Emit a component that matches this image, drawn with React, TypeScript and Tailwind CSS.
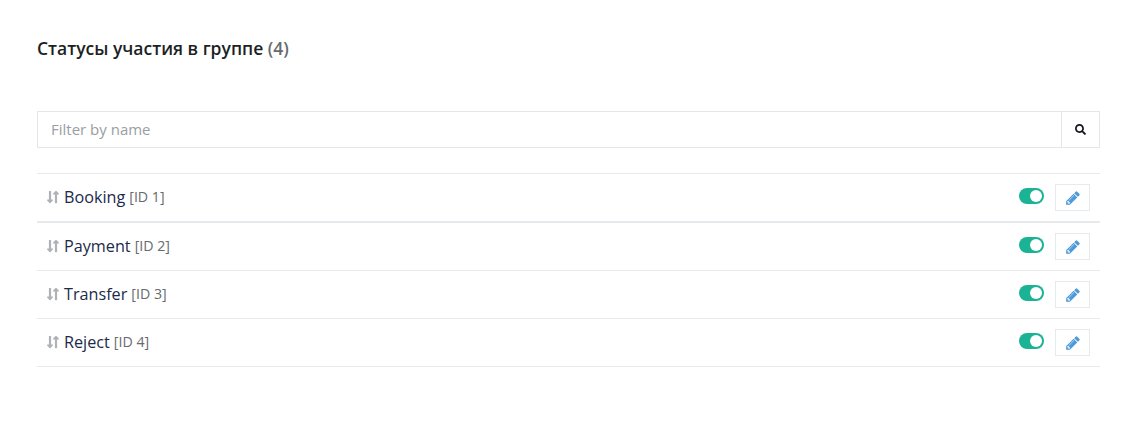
import { FaLongArrowAltDown, FaLongArrowAltUp, FaSearch } from 'react-icons/fa'

const statuses = [
  { name: 'Booking', id: 1 },
  { name: 'Payment', id: 2 },
  { name: 'Transfer', id: 3 },
  { name: 'Reject', id: 4 },
]

function Toggle() {
  return (
    <span className="-mt-[3px] flex h-[16px] w-[25px] justify-end rounded-full bg-[#1ab394] p-[2px]">
      <span className="h-[12px] w-[12px] rounded-full bg-white" />
    </span>
  )
}

function PencilIcon() {
  return (
    <svg viewBox="0 0 1792 1792" fill="currentColor" className="h-[16px] w-[16px]">
      <path d="M491 1536l91-91-235-235-91 91v107h128v128h107zm523-928q0-22-22-22-10 0-17 7l-542 542q-7 7-7 17 0 22 22 22 10 0 17-7l542-542q7-7 7-17zm-54-192l416 416-832 832h-416v-416zm683 96q0 53-37 90l-166 166-416-416 166-165q36-38 90-38 53 0 91 38l235 234q37 39 37 91z" />
    </svg>
  )
}

export default function App() {
  return (
    <div className="h-[421px] bg-white px-[37px] pr-[44px] pt-[37px] font-['Open_Sans',sans-serif] text-[#1f2a44]">
      {/* Title */}
      <h2 className="h-[23px] text-[17.5px] leading-[23px] font-semibold text-[#1c1f24]">
        Статусы участия в группе <span className="text-[#676a6c]">(4)</span>
      </h2>

      {/* Filter */}
      <div className="mt-[51px] flex h-[37px] border border-[#e5e6e7]">
        <input
          placeholder="Filter by name"
          className="min-w-0 flex-1 px-[13px] text-[15px] outline-none placeholder:text-[#9a9ea3]"
        />
        <button className="flex w-[38px] items-center justify-center border-l border-[#e5e6e7] text-[#14171f]">
          <FaSearch className="h-[11px] w-[11px]" />
        </button>
      </div>

      {/* List */}
      <ul className="mt-[25px] border-t border-[#e7eaec]">
        {statuses.map((item, i) => (
          <li
            key={item.id}
            className={`flex items-center pr-[10px] pl-[10px] ${
              i === 0 ? 'h-[49px] border-b-2' : 'h-[48px] border-b'
            } border-[#e7eaec]`}
          >
            <span className="mr-[3px] -mt-[2px] flex w-[14px] text-[#aeb1b5]">
              <FaLongArrowAltDown className="-mx-[1px] h-[14px] w-[8px]" />
              <FaLongArrowAltUp className="-mx-[1px] h-[14px] w-[8px]" />
            </span>
            <span className="-mt-[1px] text-[16.2px] text-[#1b2a4a]">{item.name}</span>
            <span className="-mt-[1px] ml-[4px] text-[14.2px] text-[#676a6c]">[ID {item.id}]</span>
            <span className="ml-auto">
              <Toggle />
            </span>
            <button className="ml-[11px] flex h-[27px] w-[35px] items-center justify-center border border-[#e7eaec] text-[#4f9ad8]">
              <PencilIcon />
            </button>
          </li>
        ))}
      </ul>
    </div>
  )
}
